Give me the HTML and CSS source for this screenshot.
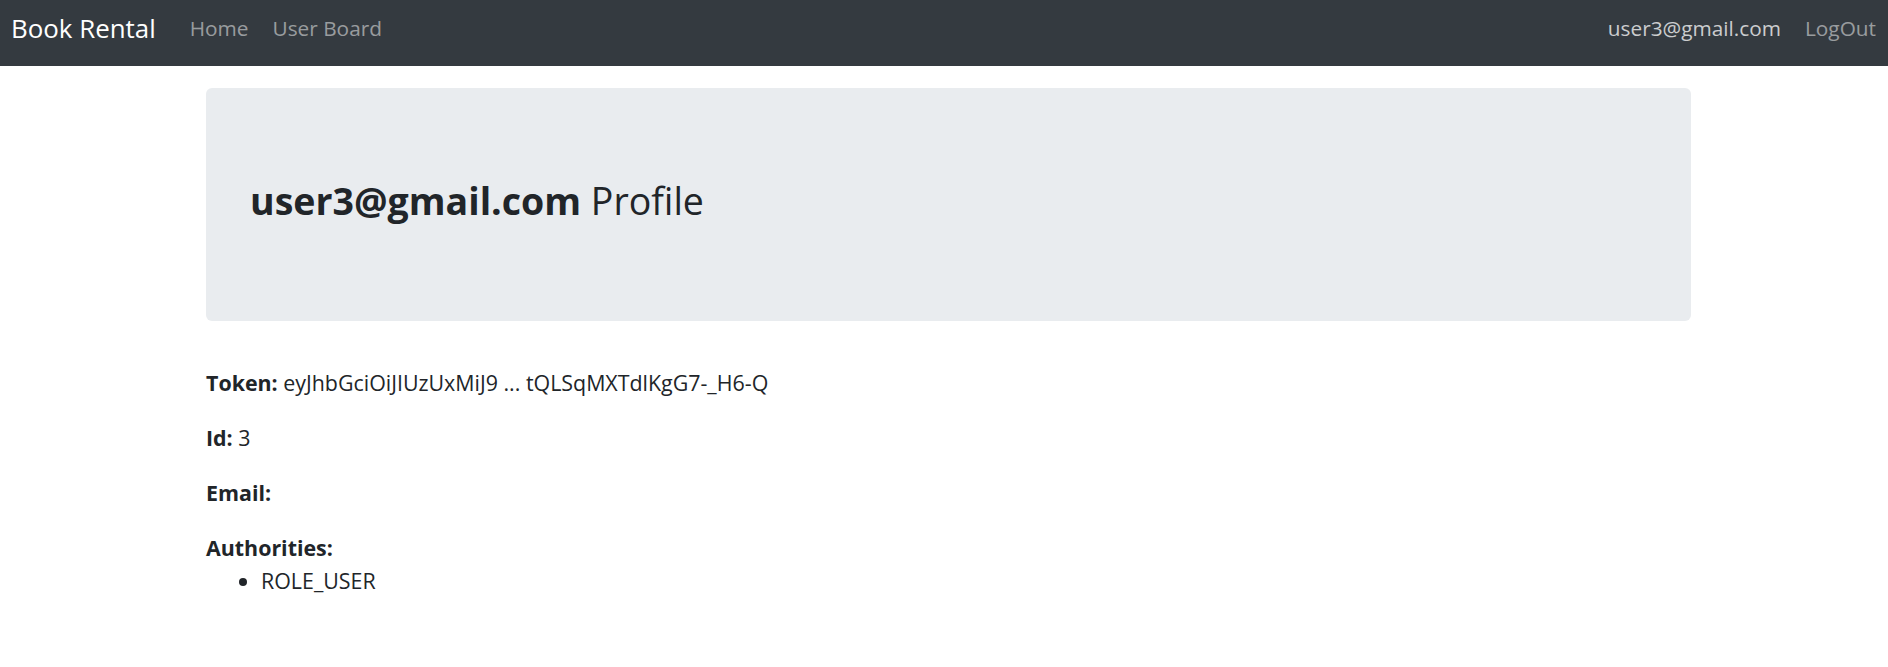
FILE: index.html
```html
<!DOCTYPE html>
<html lang="en">
<head>
<meta charset="utf-8">
<title>Book Rental</title>
<link rel="stylesheet" href="styles.css">
</head>
<body>
<nav class="navbar">
  <a class="brand" href="#">Book Rental</a>
  <div class="nav-left">
    <a class="nav-link" href="#">Home</a>
    <a class="nav-link" href="#">User Board</a>
  </div>
  <div class="nav-right">
    <a class="nav-link user" href="#">user3@gmail.com</a>
    <a class="nav-link" href="#">LogOut</a>
  </div>
</nav>
<div class="container">
  <header class="jumbotron">
    <h3 class="title"><strong>user3@gmail.com</strong> Profile</h3>
  </header>
  <p class="row"><strong>Token:</strong> eyJhbGciOiJIUzUxMiJ9 ... tQLSqMXTdlKgG7-_H6-Q</p>
  <p class="row"><strong>Id:</strong> 3</p>
  <p class="row"><strong>Email:</strong> </p>
  <strong class="label">Authorities:</strong>
  <ul class="roles">
    <li>ROLE_USER</li>
  </ul>
</div>
</body>
</html>
```
FILE: styles.css
```css
html, body {
  margin: 0;
  padding: 0;
  background: #ffffff;
}
body {
  font-family: "Open Sans", "Noto Sans", sans-serif;
  font-size: 21.4px;
  line-height: 33px;
  color: #212529;
}
a {
  text-decoration: none;
}
.navbar {
  display: flex;
  align-items: center;
  height: 56px;
  padding: 0 0 10px 11px;
  background: #343a40;
}
.brand {
  font-size: 25.9px;
  line-height: 56px;
  color: #ffffff;
  margin-right: 22px;
  white-space: nowrap;
}
.nav-left, .nav-right {
  display: flex;
  align-items: center;
}
.nav-right {
  margin-left: auto;
}
.nav-link {
  padding: 0 12px;
  font-size: 20.8px;
  line-height: 56px;
  color: rgba(255, 255, 255, 0.5);
  white-space: nowrap;
}
.nav-link.user {
  color: rgba(255, 255, 255, 0.75);
}
.container {
  width: 1485px;
  margin: 22px 0 0 206px;
}
.jumbotron {
  background: #e9ecef;
  border-radius: 6px;
  padding: 90px 44px 86px;
  margin-bottom: 45px;
}
.title {
  margin: 0 0 11px;
  font-size: 37.5px;
  line-height: 46px;
  font-weight: 500;
}
.title strong {
  font-weight: 700;
}
.row {
  margin: 0 0 22px;
}
.row strong, .label {
  font-weight: 700;
}
.roles {
  margin: 0;
  padding-left: 55px;
}
```
